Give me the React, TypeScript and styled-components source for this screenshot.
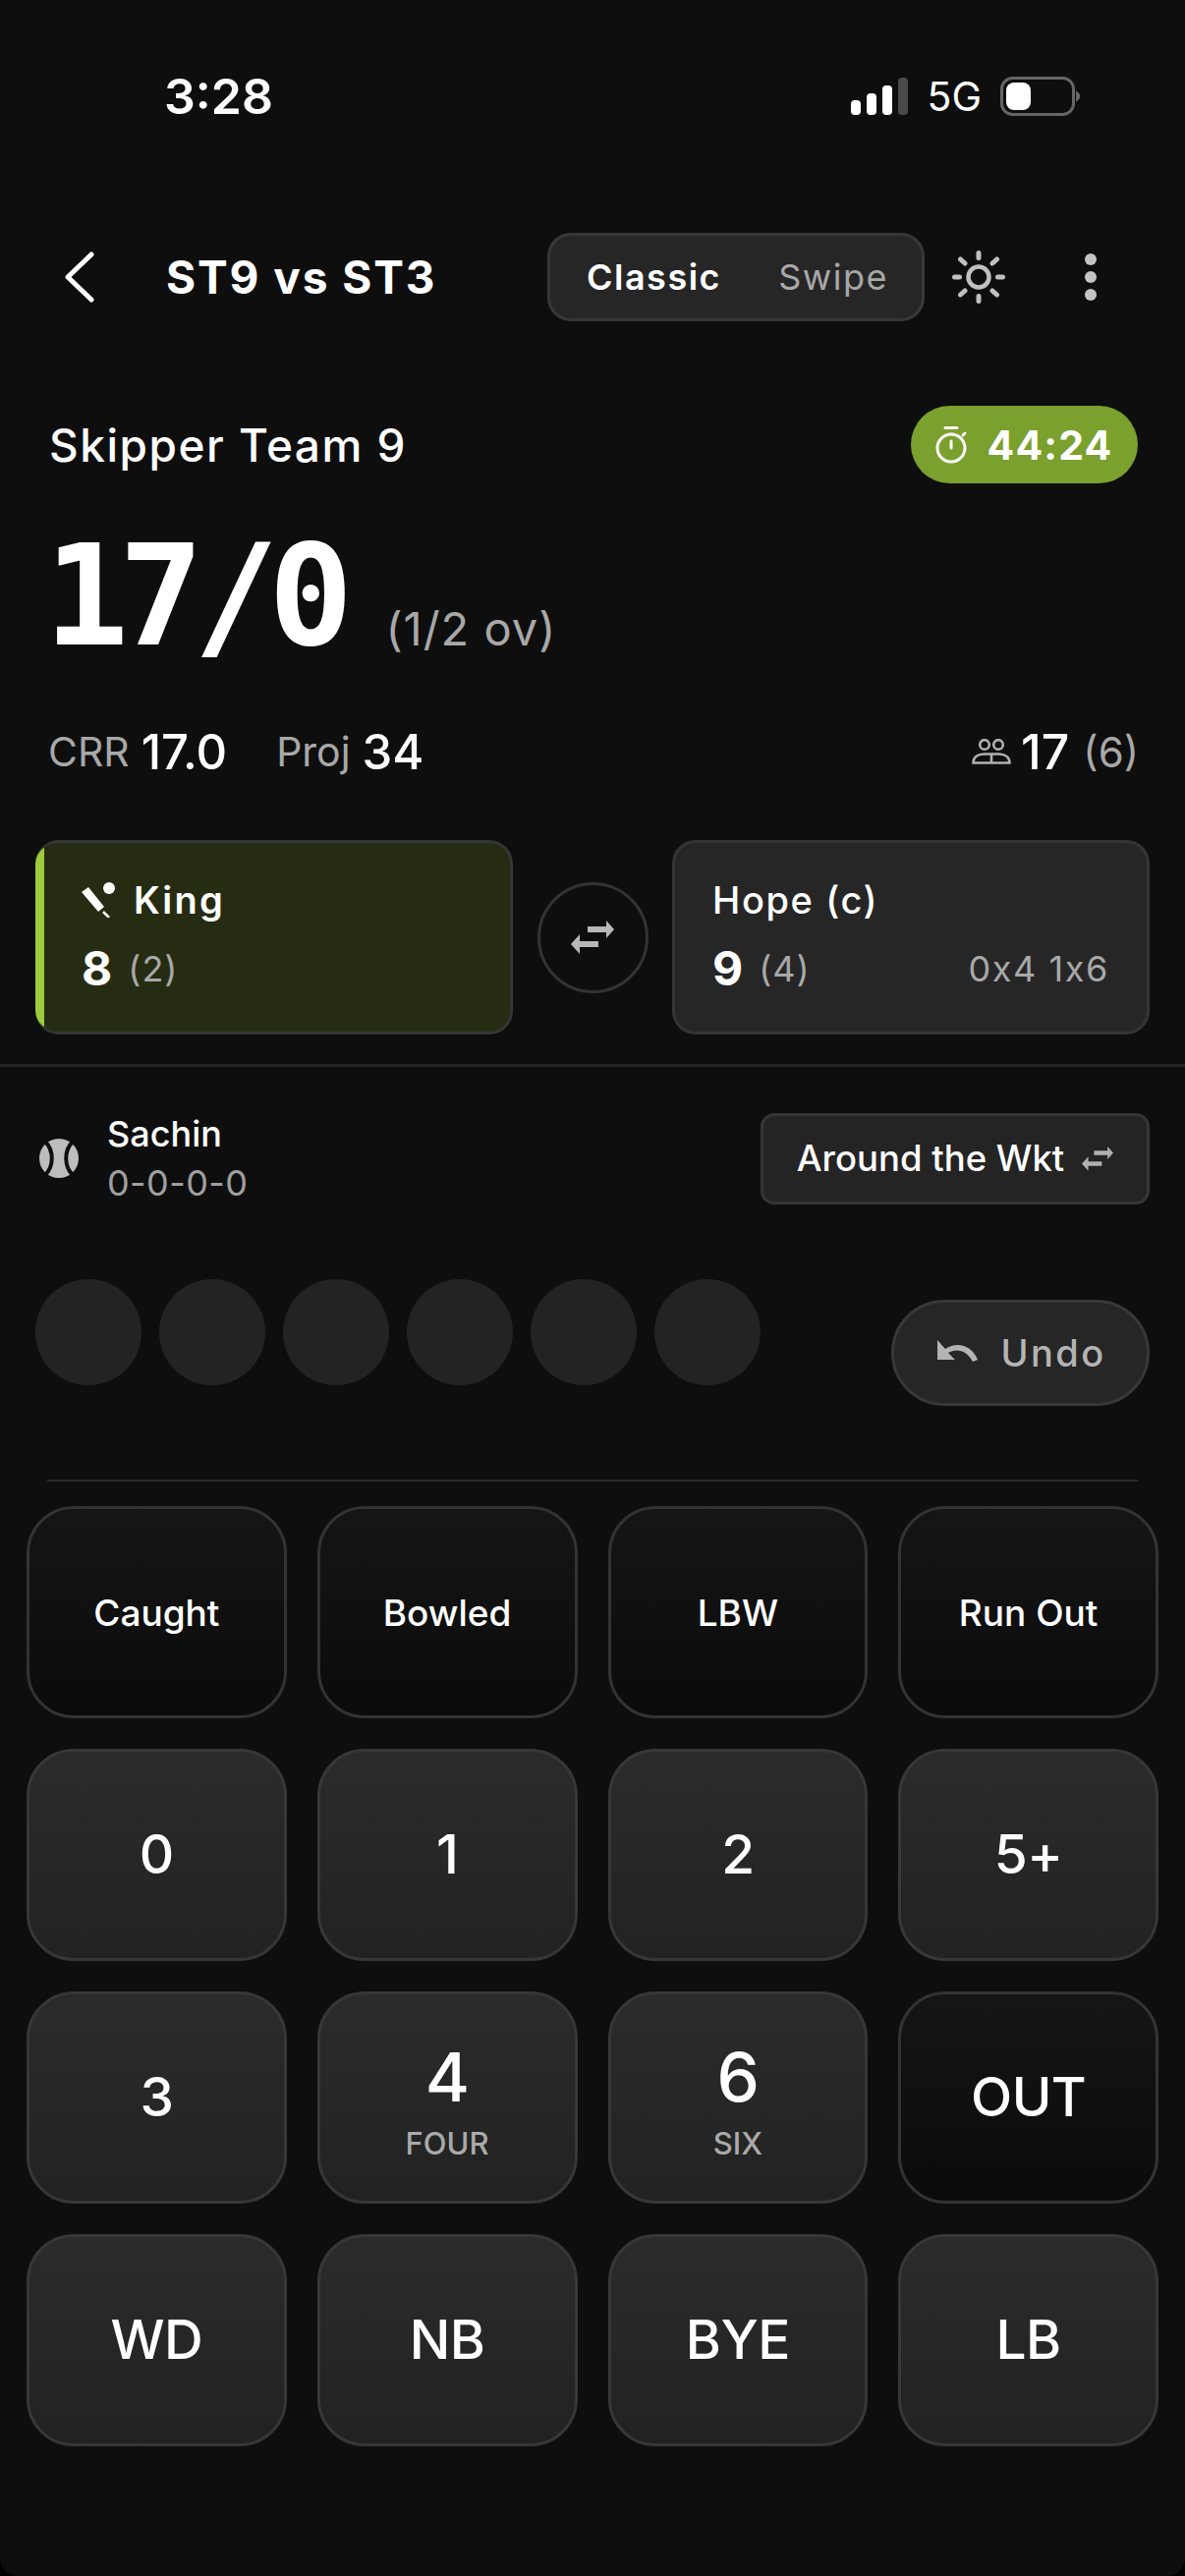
import React from "react";
import styled, { createGlobalStyle } from "styled-components";

const Global = createGlobalStyle`
  html, body { margin: 0; padding: 0; background: #000; }
  * { box-sizing: border-box; }
`;

const Page = styled.div`
  width: 1206px;
  height: 2622px;
  background: #0e0e0e;
  border-radius: 0 0 18px 18px;
  color: #fff;
  font-family: Inter, "Liberation Sans", sans-serif;
  display: flex;
  flex-direction: column;
  overflow: hidden;
`;

const StatusBar = styled.div`
  height: 237px;
  padding: 70px 106px 0 167px;
  display: flex;
  justify-content: space-between;
  align-items: flex-start;
`;
const Clock = styled.div`
  font-size: 50px;
  line-height: 56px;
  font-weight: 600;
`;
const StatusRight = styled.div`
  display: flex;
  align-items: center;
  gap: 19px;
  height: 56px;
`;
const FiveG = styled.span`
  font-size: 41px;
  font-weight: 400;
  line-height: 56px;
`;

const Nav = styled.div`
  height: 90px;
  display: flex;
  align-items: center;
  padding: 0 89px 0 64px;
`;
const Title = styled.div`
  font-size: 46px;
  font-weight: 700;
  letter-spacing: 1.9px;
  margin-left: 71px;
  flex: 1;
`;
const Toggle = styled.div`
  width: 384px;
  height: 90px;
  border-radius: 24px;
  background: #262626;
  border: 3px solid #383838;
  display: flex;
  align-items: center;
  justify-content: space-between;
  padding: 0 34px 0 37px;
  font-size: 36px;
  letter-spacing: 1.5px;
`;
const ToggleItem = styled.span<{ $on?: boolean }>`
  color: ${(p) => (p.$on ? "#fff" : "#a8a8a8")};
  font-weight: ${(p) => (p.$on ? 600 : 400)};
`;
const NavIcon = styled.span<{ $gap: number }>`
  display: flex;
  margin-left: ${(p) => p.$gap}px;
`;

const TeamRow = styled.div`
  margin-top: 86px;
  height: 79px;
  padding: 0 48px 0 50px;
  display: flex;
  align-items: center;
  justify-content: space-between;
`;
const TeamName = styled.div`
  font-size: 46px;
  font-weight: 500;
  letter-spacing: 1.5px;
`;
const Timer = styled.div`
  width: 231px;
  height: 79px;
  border-radius: 40px;
  background: #7aa02e;
  display: flex;
  align-items: center;
  justify-content: center;
  gap: 18px;
  font-size: 41px;
  font-weight: 700;
  letter-spacing: 1.2px;
`;

const ScoreRow = styled.div`
  margin-top: 40px;
  height: 150px;
  padding-left: 45px;
  display: flex;
  align-items: flex-end;
  gap: 43px;
`;
const Score = styled.div`
  font-family: "DejaVu Sans Mono", "Liberation Mono", monospace;
  font-weight: 700;
  font-size: 143px;
  line-height: 150px;
  letter-spacing: -10px;
`;
const Overs = styled.div`
  font-size: 47px;
  line-height: 56px;
  color: #a8a8a8;
  letter-spacing: 1px;
  margin-bottom: 14px;
`;

const StatsRow = styled.div`
  margin-top: 53px;
  height: 60px;
  padding: 0 47px 0 49px;
  display: flex;
  align-items: center;
`;
const StatLabel = styled.span`
  font-size: 41px;
  color: #a8a8a8;
`;
const StatValue = styled.span`
  font-size: 49px;
  font-weight: 500;
  margin-left: 12px;
  margin-right: 50px;
`;
const Spacer = styled.div`
  flex: 1;
`;
const PartnerValue = styled.span`
  font-size: 50px;
  font-weight: 500;
  margin-left: 10px;
`;
const PartnerBalls = styled.span`
  font-size: 42px;
  color: #a8a8a8;
  margin-left: 14px;
`;

const Batters = styled.div`
  margin-top: 60px;
  padding: 0 36px;
  display: flex;
  align-items: center;
  justify-content: space-between;
`;
const Batter = styled.div<{ $active?: boolean }>`
  width: 486px;
  height: 198px;
  border-radius: 24px;
  border: 3px solid #353535;
  ${(p) =>
    p.$active
      ? `border-left: 0;
         background: linear-gradient(90deg, #9ccc3c 9px, #262c12 9px);
         padding: 36px 38px 0 47px;`
      : `background: #262626;
         padding: 36px 38px 0 38px;`}
  display: flex;
  flex-direction: column;
  gap: 19px;
`;
const BatterName = styled.div<{ $strong?: boolean }>`
  display: flex;
  align-items: center;
  gap: 19px;
  height: 44px;
  font-size: 38px;
  letter-spacing: ${(p) => (p.$strong ? 2.2 : 1.6)}px;
  font-weight: ${(p) => (p.$strong ? 600 : 500)};
`;
const BatterLine = styled.div`
  display: flex;
  align-items: center;
  height: 58px;
`;
const Runs = styled.span`
  font-size: 48px;
  line-height: 58px;
  font-weight: 700;
`;
const Faced = styled.span`
  font-size: 36px;
  color: #a8a8a8;
  margin-left: 16px;
  letter-spacing: 1px;
`;
const Boundaries = styled.span`
  font-size: 36px;
  color: #a8a8a8;
  margin-left: auto;
  letter-spacing: 1.6px;
`;
const SwapCircle = styled.div`
  width: 113px;
  height: 113px;
  border-radius: 50%;
  border: 3px solid #333;
  display: flex;
  align-items: center;
  justify-content: center;
`;

const Rule = styled.div`
  margin-top: 30px;
  height: 3px;
  background: #232323;
`;

const BowlerRow = styled.div`
  margin-top: 45px;
  padding: 0 36px 0 40px;
  display: flex;
  align-items: center;
  height: 96px;
`;
const BowlerText = styled.div`
  margin-left: 29px;
  flex: 1;
  display: flex;
  flex-direction: column;
  gap: 6px;
`;
const BowlerName = styled.div`
  font-size: 36px;
  line-height: 44px;
  font-weight: 500;
`;
const BowlerFigures = styled.div`
  font-size: 36px;
  line-height: 44px;
  color: #a0a0a0;
  letter-spacing: 0.4px;
`;
const SideButton = styled.div`
  width: 396px;
  height: 93px;
  border-radius: 14px;
  background: #242424;
  border: 3px solid #353535;
  display: flex;
  align-items: center;
  justify-content: center;
  gap: 18px;
  font-size: 36.500px;
  font-weight: 500;
`;

const OverRow = styled.div`
  margin-top: 75px;
  padding: 0 36px;
  height: 129px;
  display: flex;
  justify-content: space-between;
`;
const Balls = styled.div`
  display: flex;
  gap: 18px;
`;
const Ball = styled.div`
  width: 108px;
  height: 108px;
  border-radius: 50%;
  background: #232323;
`;
const Undo = styled.div`
  margin-top: 21px;
  width: 263px;
  height: 108px;
  border-radius: 54px;
  background: #262626;
  border: 3px solid #383838;
  display: flex;
  align-items: center;
  justify-content: center;
  gap: 22px;
  color: #b4b4b4;
  font-size: 38px;
  font-weight: 500;
  letter-spacing: 2.4px;
  padding-left: 3px;
`;
const ThinRule = styled.div`
  margin: 75px 48px 0;
  height: 2px;
  background: #2a2a2a;
`;

const Pad = styled.div`
  margin-top: 25px;
  padding: 0 27px;
  display: grid;
  grid-template-columns: repeat(4, 1fr);
  grid-auto-rows: 216px;
  gap: 31px;
`;
const Key = styled.div<{ $outline?: boolean; $small?: boolean }>`
  border-radius: 48px;
  border: 3px solid ${(p) => (p.$outline ? "#333" : "#373737")};
  background: ${(p) =>
    p.$outline
      ? "linear-gradient(180deg, #151515, #0b0b0b)"
      : "linear-gradient(180deg, #2b2b2b, #222)"};
  display: flex;
  flex-direction: column;
  align-items: center;
  justify-content: center;
  padding-bottom: ${(p) => (p.$small ? 0 : 3)}px;
  font-size: ${(p) => (p.$small ? 37 : 55)}px;
  font-weight: 500;
  letter-spacing: ${(p) => (p.$small ? 0 : -0.5)}px;
`;
const KeyBig = styled.span`
  font-size: 69px;
  line-height: 78px;
  font-weight: 500;
  margin-top: 10px;
`;
const KeySub = styled.span`
  font-size: 31px;
  line-height: 40px;
  color: #aaa;
  font-weight: 500;
  letter-spacing: 0;
  margin-top: 9px;
`;

const Signal = () => (
  <svg width="58" height="38" viewBox="0 0 58 38">
    <rect x="0" y="23" width="10" height="15" rx="4" fill="#fff" />
    <rect x="16" y="16" width="10" height="22" rx="4" fill="#fff" />
    <rect x="32" y="8" width="10" height="30" rx="4" fill="#fff" />
    <rect x="48" y="0" width="10" height="38" rx="4" fill="#4a4a4a" />
  </svg>
);
const Battery = () => (
  <svg width="82" height="40" viewBox="0 0 82 40">
    <rect x="1.5" y="1.5" width="73" height="37" rx="11" fill="none" stroke="#666" strokeWidth="3" />
    <rect x="6" y="6" width="25" height="28" rx="8" fill="#fff" />
    <path d="M77 14 L81 18 V22 L77 26 Z" fill="#666" />
  </svg>
);
const Back = () => (
  <svg width="34" height="52" viewBox="0 0 34 52" fill="none" stroke="#fff" strokeWidth="5" strokeLinecap="round" strokeLinejoin="round">
    <path d="M29 3 L5 26 L29 49" />
  </svg>
);
const Sun = () => (
  <svg width="54" height="54" viewBox="0 0 54 54" fill="none" stroke="#c0c0c0" strokeLinecap="round">
    <circle cx="27" cy="27" r="10.500" strokeWidth="4.500" />
    <path strokeWidth="5" d="M27 2.500v5M27 46.500v5M2.500 27h5M46.500 27h5M8.500 9l4.500 4M41 41l4.500 4M8.500 45l4.500-4M41 13l4.500-4" />
  </svg>
);
const Dots = () => (
  <svg width="14" height="50" viewBox="0 0 14 50" fill="#c4c4c4">
    <circle cx="7" cy="7" r="6" />
    <circle cx="7" cy="25" r="6" />
    <circle cx="7" cy="43" r="6" />
  </svg>
);
const Stopwatch = () => (
  <svg width="34" height="38" viewBox="0 0 34 38" fill="none" stroke="#fff" strokeLinecap="round">
    <circle cx="16" cy="22" r="14" strokeWidth="3" />
    <path strokeWidth="3" d="M10 1.500h12M16 15v7M28 9l2 -2" />
  </svg>
);
const People = () => (
  <svg width="40" height="26" viewBox="0 0 40 26" fill="none" stroke="#b0b0b0" strokeWidth="2.600">
    <circle cx="13" cy="6" r="4.800" />
    <circle cx="27" cy="6" r="4.800" />
    <path d="M1.500 24.500c0-6 5-9 11-9h15c6 0 11 3 11 9zM20 16v8" />
  </svg>
);
const Swap = ({ width, color }: { width: number; color: string }) => (
  <svg width={width} height={(width * 34) / 44} viewBox="0 0 44 34" fill={color}>
    <path d="M17 6h19V0l8 9-8 9v-6H17zM28 21H9v-7L0 24l9 10v-7h19z" />
  </svg>
);
const Bat = () => (
  <svg width="34" height="36" viewBox="0 0 34 36" fill="#fff" stroke="none">
    <path d="M0 10 L7 5 L23 25 L17 30 Z" />
    <path d="M22 30 L28 36" stroke="#fff" strokeWidth="2.500" />
    <circle cx="28" cy="6" r="6" />
  </svg>
);
const BallIcon = () => (
  <svg width="40" height="40" viewBox="0 0 40 40">
    <circle cx="20" cy="20" r="20" fill="#bdbdbd" />
    <path d="M6 3c9 9 9 25 0 34M34 3c-9 9-9 25 0 34" fill="none" stroke="#0e0e0e" strokeWidth="4" />
  </svg>
);
const UndoIcon = () => (
  <svg width="42" height="26" viewBox="0 0 42 26" fill="#b4b4b4">
    <path d="M0 0v20h18l-7-7c8-5 19-3 25 9l5-2C35 5 20 1 8 9z" />
  </svg>
);

const keys: { label?: string; big?: string; sub?: string; outline?: boolean; small?: boolean }[] = [
  { label: "Caught", outline: true, small: true },
  { label: "Bowled", outline: true, small: true },
  { label: "LBW", outline: true, small: true },
  { label: "Run Out", outline: true, small: true },
  { label: "0" },
  { label: "1" },
  { label: "2" },
  { label: "5+" },
  { label: "3" },
  { big: "4", sub: "FOUR" },
  { big: "6", sub: "SIX" },
  { label: "OUT", outline: true },
  { label: "WD" },
  { label: "NB" },
  { label: "BYE" },
  { label: "LB" },
];

export default function App() {
  return (
    <Page>
      <Global />
      <StatusBar>
        <Clock>3:28</Clock>
        <StatusRight>
          <Signal />
          <FiveG>5G</FiveG>
          <Battery />
        </StatusRight>
      </StatusBar>
      <Nav>
        <Back />
        <Title>ST9 vs ST3</Title>
        <Toggle>
          <ToggleItem $on>Classic</ToggleItem>
          <ToggleItem>Swipe</ToggleItem>
        </Toggle>
        <NavIcon $gap={28}><Sun /></NavIcon>
        <NavIcon $gap={80}><Dots /></NavIcon>
      </Nav>
      <TeamRow>
        <TeamName>Skipper Team 9</TeamName>
        <Timer><Stopwatch />44:24</Timer>
      </TeamRow>
      <ScoreRow>
        <Score>17/0</Score>
        <Overs>(1/2 ov)</Overs>
      </ScoreRow>
      <StatsRow>
        <StatLabel>CRR</StatLabel>
        <StatValue>17.0</StatValue>
        <StatLabel>Proj</StatLabel>
        <StatValue>34</StatValue>
        <Spacer />
        <People />
        <PartnerValue>17</PartnerValue>
        <PartnerBalls>(6)</PartnerBalls>
      </StatsRow>
      <Batters>
        <Batter $active>
          <BatterName $strong><Bat />King</BatterName>
          <BatterLine><Runs>8</Runs><Faced>(2)</Faced></BatterLine>
        </Batter>
        <SwapCircle><Swap width={44} color="#b8b8b8" /></SwapCircle>
        <Batter>
          <BatterName>Hope (c)</BatterName>
          <BatterLine><Runs>9</Runs><Faced>(4)</Faced><Boundaries>0x4 1x6</Boundaries></BatterLine>
        </Batter>
      </Batters>
      <Rule />
      <BowlerRow>
        <BallIcon />
        <BowlerText>
          <BowlerName>Sachin</BowlerName>
          <BowlerFigures>0-0-0-0</BowlerFigures>
        </BowlerText>
        <SideButton>Around the Wkt <Swap width={32} color="#b0b0b0" /></SideButton>
      </BowlerRow>
      <OverRow>
        <Balls>
          {Array.from({ length: 6 }).map((_, i) => <Ball key={i} />)}
        </Balls>
        <Undo><UndoIcon />Undo</Undo>
      </OverRow>
      <ThinRule />
      <Pad>
        {keys.map((k, i) => (
          <Key key={i} $outline={k.outline} $small={k.small}>
            {k.big ? <><KeyBig>{k.big}</KeyBig><KeySub>{k.sub}</KeySub></> : k.label}
          </Key>
        ))}
      </Pad>
    </Page>
  );
}
